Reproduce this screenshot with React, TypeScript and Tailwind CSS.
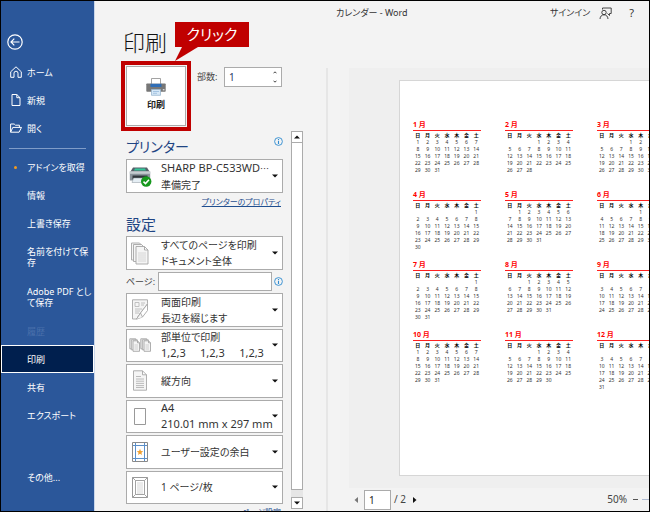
import React from "react";

type NavItem = { label: string; tall?: boolean; icon?: React.ReactNode };

const line = { fill: "none", stroke: "currentColor", strokeWidth: 1 };

const HomeIcon = () => (
  <svg width="12" height="12" viewBox="0 0 12 12" {...line}>
    <path d="M.7 5.8 6 .8l5.3 5v5.5H8V7.2a2 2 0 0 0-4 0v4.1H.7z" />
  </svg>
);
const NewIcon = () => (
  <svg width="12" height="12" viewBox="0 0 12 12" {...line}>
    <path d="M2 .5h4.8L10 3.7v7.8H2zM6.8.5v3.2H10" />
  </svg>
);
const OpenIcon = () => (
  <svg width="12" height="12" viewBox="0 0 12 12" {...line}>
    <path d="M.6 10.2V2h3.6l1.2 1.2h4v2.2M.6 10.2l2.2-4.8h8.7l-2.4 4.8z" />
  </svg>
);

const topNav: NavItem[] = [
  { label: "ホーム", icon: <HomeIcon /> },
  { label: "新規", icon: <NewIcon /> },
  { label: "開く", icon: <OpenIcon /> },
];

const mainNav: NavItem[] = [
  { label: "アドインを取得", icon: <span className="ml-1 size-[3px] rounded-full bg-[#f39a1e]" /> },
  { label: "情報" },
  { label: "上書き保存" },
  { label: "名前を付けて保存", tall: true },
  { label: "Adobe PDF として保存", tall: true },
  { label: "履歴" },
  { label: "印刷" },
  { label: "共有" },
  { label: "エクスポート" },
];

function NavButton({ item }: { item: NavItem }) {
  const active = item.label === "印刷";
  const disabled = item.label === "履歴";
  return (
    <button
      type="button"
      disabled={disabled}
      aria-current={active ? "page" : undefined}
      className={
        "flex w-full shrink-0 items-center pl-[9px] text-left text-[9px] leading-[11px] " +
        (item.tall ? "h-10 " : "h-7 ") +
        (active ? "bg-[#001f4e] outline outline-1 -outline-offset-1 outline-white " : "") +
        (disabled ? "text-[#4a70ab]" : "text-white")
      }
    >
      <span className="flex w-[17px] shrink-0 items-center">{item.icon}</span>
      <span className="w-[66px]">{item.label}</span>
    </button>
  );
}

function Sidebar() {
  return (
    <nav className="flex w-[94px] shrink-0 flex-col border-r border-[#c9d6ea] bg-[#2b579a]">
      <button type="button" aria-label="戻る" className="mt-[33px] mb-2 ml-1.5 size-4 text-white">
        <svg width="16" height="16" viewBox="0 0 16 16" fill="none" stroke="currentColor" strokeWidth="1.2">
          <circle cx="8" cy="8" r="7.2" />
          <path d="M12.5 8H4M7.3 4.7 4 8l3.3 3.3" />
        </svg>
      </button>
      {topNav.map((i) => (
        <NavButton key={i.label} item={i} />
      ))}
      <hr className="mx-2 mt-1.5 mb-1 border-[#7f9cc8]" />
      {mainNav.map((i) => (
        <NavButton key={i.label} item={i} />
      ))}
      <div className="mt-auto mb-5">
        <NavButton item={{ label: "その他..." }} />
      </div>
    </nav>
  );
}

const InfoIcon = () => (
  <svg width="9" height="9" viewBox="0 0 9 9" fill="none" stroke="#2e8bd0" role="img" aria-label="情報">
    <circle cx="4.5" cy="4.5" r="3.9" strokeWidth=".9" />
    <path d="M4.5 1.9v1M4.5 3.7v3.2" strokeWidth="1.1" />
  </svg>
);

const PrinterIcon = () => (
  <svg width="20" height="18" viewBox="0 0 20 18">
    <path d="M1 5.5h18q.7 0 .7.8V13q0 .8-.8.8H1.1q-.8 0-.8-.8V6.3q0-.8.7-.8z" fill="#777" />
    <path d="M5.5.5h9V6h-9z" fill="#fff" stroke="#8b8b8b" strokeWidth=".8" />
    <path d="M4.5 5.8h11V9h-11z" fill="#2f6db5" />
    <path d="M16.8 11.8h1.7" stroke="#fff" />
    <path d="M5.5 11.5h9v5.800h-9z" fill="#d6e8f7" stroke="#9bb7d1" strokeWidth=".8" />
    <path d="M7 13.5h6M7 15.3h4" stroke="#8fb4d9" strokeWidth=".7" />
  </svg>
);

const DeviceIcon = () => (
  <svg width="23" height="21" viewBox="0 0 23 21">
    <path d="M4 1.5h14l2.5 4H1.5z" fill="#55606a" />
    <path d="M6 2.5h10l1 2H5z" fill="#35c79a" />
    <path d="M.8 5.5h20.4v9H.8z" fill="#8a949c" />
    <path d="M.8 5.5h20.4v2.3H.8z" fill="#c5ccd1" />
    <path d="M3.5 9.5h15v4h-15z" fill="#30373d" />
    <path d="M4.5 12h13l1.5 4.5H3z" fill="#e5eef4" stroke="#8a949c" strokeWidth=".5" />
    <circle cx="17.2" cy="15.5" r="5.2" fill="#16981d" />
    <path d="m14.5 15.6 2 2 3.5-3.9" fill="none" stroke="#fff" strokeWidth="1.5" />
  </svg>
);

const grey = { fill: "#f5f5f5", stroke: "#a6a6a6", strokeWidth: 0.9 };

const PagesIcon = () => (
  <svg width="20" height="23" viewBox="0 0 20 23" {...grey}>
    <path d="M1.5 1h8l3 3v14h-11z" />
    <path d="M3.5 2.5h8l3 3v14h-11z" />
    <path d="M6 4.5h8.5L18 8v14H6zM14.5 4.5V8H18" />
    <path d="M8 11h8M8 13h8M8 15h8M8 17h8M8 19h8" stroke="#d4d4d4" />
  </svg>
);
const DuplexIcon = () => (
  <svg width="18" height="21" viewBox="0 0 18 21" {...grey}>
    <path d="M1.5.8h15v4L11 12l-5.5 8h-4z" />
    <path d="M4 3.5h4v4H4zM10 4h4M10 6h3M4 10h7M4 12h5M4 14h4" stroke="#bbb" fill="none" />
    <path d="m16.5 5-7 9-4 6.2 6-2.2 5-6.5z" fill="#fff" />
    <path d="m5.5 20 4-6 2 4" />
  </svg>
);
const CollateIcon = () => (
  <svg width="23" height="14" viewBox="0 0 23 14" {...grey}>
    {[0, 11].map((x) => (
      <g key={x} transform={`translate(${x} 0)`}>
        <path d="M.8.8h6v10h-6z" />
        <path d="M2.3 1.8h6v10h-6z" />
        <path d="M4 2.8h4.5l2 2v8.5H4zM8.5 2.8v2h2" />
        <path d="M5.5 7H9M5.5 9H9M5.5 11H9" stroke="#ccc" />
      </g>
    ))}
  </svg>
);
const PortraitIcon = () => (
  <svg width="16" height="21" viewBox="0 0 16 21" {...grey}>
    <path d="M1.5.8h9l4 4v15.4h-13zM10.5.8v4h4" />
    <path d="M4 6.5h5M4 9h8M4 11.2h8M4 13.4h8M4 15.6h8M4 17.5h8" stroke="#b4b4b4" />
  </svg>
);
const PaperIcon = () => (
  <svg width="14" height="19" viewBox="0 0 14 19">
    <path d="M1.5 1.5h11v16h-11z" fill="#fff" stroke="#999" />
  </svg>
);
const MarginIcon = () => (
  <svg width="16" height="20" viewBox="0 0 16 20" fill="none">
    <path d="M.5.5h15v19H.5z" fill="#fff" stroke="#8a8a8a" />
    <path d="M3.5 1v18M12.5 1v18M1 3.5h14M1 16.5h14" stroke="#5b8fc9" />
    <path d="m8 6.8.9 2.3 2.4.1-1.9 1.5.7 2.4L8 11.7l-2.1 1.400.7-2.400-1.900-1.500 2.400-.1z" fill="#f0a030" />
  </svg>
);
const SheetIcon = () => (
  <svg width="16" height="21" viewBox="0 0 16 21" fill="none" stroke="#999">
    <path d="M.5.5h15v20H.5z" fill="#fff" />
    <path d="M3.5 3.5h9v14h-9zM.5.5l3 3M15.5.5l-3 3M.5 20.5l3-3M15.5 20.5l-3-3" strokeWidth=".9" />
    <path d="M5 6h6M5 8h6M5 10h6M5 12h6M5 14h6M5 16h6" stroke="#ccc" strokeWidth=".8" />
  </svg>
);

const DownArrow = () => (
  <svg width="6" height="4" viewBox="0 0 6 4" className="shrink-0">
    <path d="M0 .5h6l-3 3z" fill="#111" />
  </svg>
);

type OptionProps = {
  icon: React.ReactNode;
  title: React.ReactNode;
  detail?: string;
  latin?: "title" | "detail" | "both";
};

function OptionButton({ icon, title, detail, latin }: OptionProps) {
  const size = (big: boolean) => (big ? "text-[11px]" : "text-[10px]");
  return (
    <button
      type="button"
      aria-haspopup="listbox"
      className="flex h-full w-full items-center border border-[#ababab] bg-white pr-1 text-left text-[#333]"
    >
      <span className="flex w-[26px] shrink-0 justify-center">{icon}</span>
      <span className="ml-2 min-w-0 flex-1 leading-4 whitespace-pre">
        <span className={"block " + size(latin === "title" || latin === "both")}>{title}</span>
        {detail && <span className={"block " + size(latin === "detail" || latin === "both")}>{detail}</span>}
      </span>
      <DownArrow />
    </button>
  );
}

function PrintOptions() {
  return (
    <section className="flex h-full w-[157px] shrink-0 flex-col overflow-hidden">
      <div className="flex h-7 shrink-0 items-start justify-between">
        <h2 className="pt-1.5 text-[14px] leading-5 text-[#1f4583]">プリンター</h2>
        <span className="pt-1.5">
          <InfoIcon />
        </span>
      </div>
      <div className="h-[34px] shrink-0">
        <OptionButton
          icon={<DeviceIcon />}
          title={
            <>
              SHARP BP-C533WD<span className="font-['Noto_Sans_CJK_JP',sans-serif] text-[9px]">…</span>
            </>
          }
          detail="準備完了"
          latin="title"
        />
      </div>
      <a href="#properties" className="mt-0.5 mr-0.5 self-end text-[8px] leading-[13px] text-[#1f4e8f] underline">
        プリンターのプロパティ
      </a>
      <h2 className="mt-1.5 mb-0.5 h-5 shrink-0 text-[15px] leading-5 text-[#1f4583]">設定</h2>
      <div className="h-[34px] shrink-0">
        <OptionButton icon={<PagesIcon />} title="すべてのページを印刷" detail="ドキュメント全体" />
      </div>
      <div className="my-0.5 flex h-[19px] shrink-0 items-center text-[9px] text-[#444]">
        <label htmlFor="pages" className="w-8">
          ページ:
        </label>
        <input id="pages" type="text" className="h-full w-[114px] border border-[#ababab] bg-white px-1" />
        <span className="ml-auto">
          <InfoIcon />
        </span>
      </div>
      <div className="grid h-[211px] shrink-0 auto-rows-fr grid-cols-1 gap-[2px]">
        <OptionButton icon={<DuplexIcon />} title="両面印刷" detail="長辺を綴じます" />
        <OptionButton icon={<CollateIcon />} title="部単位で印刷" detail="1,2,3     1,2,3     1,2,3" latin="detail" />
        <OptionButton icon={<PortraitIcon />} title="縦方向" />
        <OptionButton icon={<PaperIcon />} title="A4" detail="210.01 mm x 297 mm" latin="both" />
        <OptionButton icon={<MarginIcon />} title="ユーザー設定の余白" />
        <OptionButton icon={<SheetIcon />} title="1 ページ/枚" />
      </div>
      <a href="#page-setup" className="mt-px mr-0.5 self-end text-[8px] leading-[13px] text-[#1f4e8f] underline">
        ページ設定
      </a>
    </section>
  );
}

function ScrollBar() {
  return (
    <div className="mb-0.5 ml-2 flex w-3 shrink-0 flex-col bg-[#e6e6e6]">
      <button type="button" aria-label="上へ" className="flex h-3 items-center justify-center border border-[#ababab] bg-white">
        <svg width="6" height="4" viewBox="0 0 6 4">
          <path d="M0 3.5h6l-3-3z" fill="#111" />
        </svg>
      </button>
      <div className="flex-1 border border-t-0 border-[#ababab] bg-white" />
      <button
        type="button"
        aria-label="下へ"
        className="mt-[7px] flex h-3 items-center justify-center border border-[#ababab] bg-white"
      >
        <DownArrow />
      </button>
    </div>
  );
}

const months = Array.from({ length: 12 }, (_, m) => ({
  name: m + 1,
  first: new Date(2023, m, 1).getDay(),
  days: new Date(2023, m + 1, 0).getDate(),
}));

function Month({ name, first, days }: { name: number; first: number; days: number }) {
  const weeks = Math.ceil((first + days) / 7);
  return (
    <table className="block h-[70px] w-[68px] text-[5px] leading-[7px] text-[#333]">
      <caption className="block text-left text-[7px] leading-[8px] font-bold text-[#ff0000]">
        {name} 月
        <span className="mt-px mb-px block h-px bg-[#ff2020]" />
      </caption>
      <thead className="block">
        <tr className="grid grid-cols-7 text-black">
          {["日", "月", "火", "水", "木", "金", "土"].map((d) => (
            <th key={d} className="block h-[7px] p-0 text-center font-bold">
              {d}
            </th>
          ))}
        </tr>
      </thead>
      <tbody className="block">
        {Array.from({ length: weeks }, (_, w) => (
          <tr key={w} className="grid grid-cols-7">
            {Array.from({ length: 7 }, (_, d) => {
              const n = w * 7 + d - first + 1;
              return (
                <td key={d} className="block h-[7px] p-0 text-center">
                  {n > 0 && n <= days ? n : ""}
                </td>
              );
            })}
          </tr>
        ))}
      </tbody>
    </table>
  );
}

function Preview() {
  return (
    <section className="mt-[7px] ml-[21px] flex min-w-0 flex-1 flex-col">
      <div className="flex min-h-0 flex-1 overflow-hidden bg-[#efefef] pt-3 pb-3 pl-[50px]">
        <div className="min-w-0 flex-1 overflow-hidden border border-r-0 border-[#d6d6d6] bg-white pt-10 pl-[13px]">
          <div className="grid w-max grid-cols-3 gap-x-6">
            {months.map((m) => (
              <Month key={m.name} {...m} />
            ))}
          </div>
        </div>
      </div>
      <div className="flex h-[23px] shrink-0 items-center text-[10px] text-[#444]">
        <button type="button" aria-label="前のページ" className="ml-[5px]">
          <svg width="4" height="6" viewBox="0 0 4 6">
            <path d="M4 0v6L.5 3z" fill="#777" />
          </svg>
        </button>
        <input
          aria-label="ページ番号"
          defaultValue="1"
          className="ml-[6px] h-5 w-[27px] border border-[#ababab] bg-white px-1 text-[10px] text-[#1c1c1c]"
        />
        <span className="ml-[3px]">/ 2</span>
        <button type="button" aria-label="次のページ" className="ml-[7px]">
          <svg width="4" height="6" viewBox="0 0 4 6">
            <path d="M0 0v6l3.5-3z" fill="#111" />
          </svg>
        </button>
        <span className="ml-auto">50%</span>
        <button type="button" aria-label="縮小" className="ml-1.5 h-px w-[5px] bg-[#555]" />
        <span className="ml-1 h-px w-[7px] bg-[#aebad0]" />
      </div>
    </section>
  );
}

function TitleBar() {
  return (
    <header className="flex h-6 shrink-0 items-center pr-[15px] text-[9px] text-[#333]">
      <span className="flex-1 pl-[241px]">カレンダー - Word</span>
      <button type="button">サインイン</button>
      <button type="button" aria-label="フィードバック" className="ml-[9px]">
        <svg width="13" height="13" viewBox="0 0 13 13" fill="none" stroke="#333" strokeWidth=".9">
          <path d="M3.5 2.5V1h8.7v5.5h-1.7v2l-2-2" />
          <circle cx="5" cy="5.5" r="2.2" />
          <path d="M1 12c.2-2.7 1.700-4.200 4-4.200S8.800 9.300 9 12" />
        </svg>
      </button>
      <button type="button" aria-label="ヘルプ" className="ml-[17px] text-[11px]">
        ?
      </button>
    </header>
  );
}

export default function App() {
  return (
    <div
      lang="ja"
      className="flex h-screen min-h-[512px] overflow-hidden border border-black bg-[#f3f3f3] font-['Noto_Sans','Noto_Sans_CJK_JP',sans-serif] [font-feature-settings:'palt']"
    >
      <Sidebar />
      <main className="flex min-w-0 flex-1 flex-col">
        <TitleBar />
        <div className="relative h-9 shrink-0 pl-7">
          <h1 className="pt-px text-[22px] leading-8 font-light text-[#111]">印刷</h1>
          <div className="absolute -top-[3px] left-20 z-10">
            <div className="h-[25px] w-[74px] bg-[#c00000] text-center text-[15px] leading-[25px] text-white">
              クリック
            </div>
            <svg className="block" width="24" height="14" viewBox="0 0 24 14">
              <path d="M7 0h16L0 14z" fill="#c00000" />
            </svg>
          </div>
        </div>
        <div className="flex min-h-0 flex-1">
          <div className="flex w-[231px] shrink-0 flex-col pl-[26px]">
            <div className="flex shrink-0 items-start">
              <div className="size-[70px] shrink-0 border-4 border-[#c00000] p-px">
                <button
                  type="button"
                  className="flex size-full flex-col items-center justify-center gap-[3px] border border-[#ababab] bg-white pb-1 text-[9px] leading-3 font-semibold text-[#222]"
                >
                  <PrinterIcon />
                  印刷
                </button>
              </div>
              <label htmlFor="copies" className="mt-1.5 ml-1.5 w-[27px] text-[9px] leading-5 text-[#444]">
                部数:
              </label>
              <div className="mt-1.5 flex h-5 w-[58px] border border-[#ababab] bg-white">
                <input id="copies" defaultValue="1" className="min-w-0 flex-1 pl-1 text-[10px] text-[#1f3864]" />
                <div className="flex w-3 flex-col items-center justify-between py-[3px]">
                  <button type="button" aria-label="増やす">
                    <svg className="block" width="4" height="3" viewBox="0 0 4 3">
                      <path d="M.5 2.3 2 .8l1.5 1.5" fill="none" stroke="#444" />
                    </svg>
                  </button>
                  <button type="button" aria-label="減らす">
                    <svg className="block" width="4" height="3" viewBox="0 0 4 3">
                      <path d="M.5.7 2 2.2 3.5.7" fill="none" stroke="#444" />
                    </svg>
                  </button>
                </div>
              </div>
            </div>
            <div className="flex min-h-0 flex-1 pl-[5px]">
              <PrintOptions />
              <ScrollBar />
            </div>
          </div>
          <div className="mt-[7px] w-0.5 shrink-0 bg-[#e6e6e6]" />
          <Preview />
        </div>
      </main>
    </div>
  );
}
